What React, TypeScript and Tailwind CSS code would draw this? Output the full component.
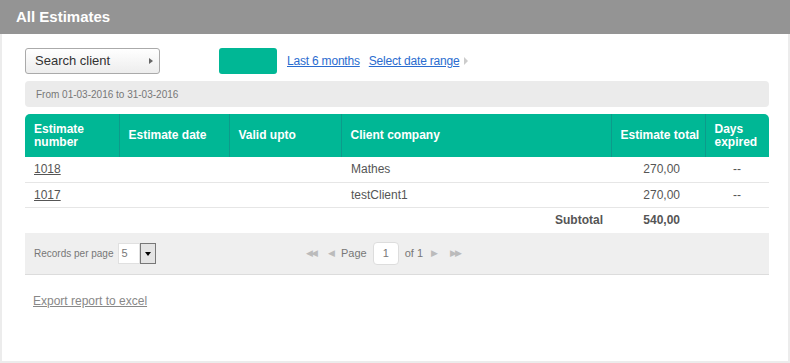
const rows = [
  { number: "1018", client: "Mathes", total: "270,00", expired: "--" },
  { number: "1017", client: "testClient1", total: "270,00", expired: "--" },
];

const headers = [
  { label: "Estimate number", className: "w-[94px]" },
  { label: "Estimate date", className: "w-[110px]" },
  { label: "Valid upto", className: "w-[112px]" },
  { label: "Client company", className: "w-[270px]" },
  { label: "Estimate total", className: "w-[94px] whitespace-nowrap" },
  { label: "Days expired", className: "w-[64px]" },
];

export default function App() {
  return (
    <div className="w-[790px] h-[363px] bg-white font-['Liberation_Sans',Arial,sans-serif] text-[#333]">
      <div className="h-[34px] bg-[#949494] flex items-center px-4">
        <h1 className="text-white font-bold text-[15px]">All Estimates</h1>
      </div>
      <div className="h-[329px] border-x-2 border-b-2 border-[#ececec] pl-[23px] pr-[19px] pt-[14px]">
        <Filters />
        <div className="mt-[7px] h-[26px] rounded bg-[#ebebeb] flex items-center px-[11px] text-[10px] text-[#777]">
          From 01-03-2016 to 31-03-2016
        </div>
        <EstimatesTable />
        <a href="#" className="inline-block mt-[17px] ml-[8px] text-[12px] text-[#888] underline">
          Export report to excel
        </a>
      </div>
    </div>
  );
}

const Filters = () => {
  return (
    <div className="flex items-center h-[26px]">
      <button className="w-[135px] h-[26px] rounded-[3px] border border-[#aaa] bg-gradient-to-b from-white to-[#ededed] flex items-center justify-between pl-[9px] pr-[6px] text-[13px] text-[#333]">
        Search client
        <span className="w-0 h-0 border-y-[3px] border-y-transparent border-l-[4px] border-l-[#666]" />
      </button>
      <button className="ml-[59px] w-[58px] h-[26px] rounded-[3px] bg-[#00b795]" />
      <a href="#" className="ml-[10px] text-[12px] tracking-[-0.2px] text-[#2a6ccf] underline">
        Last 6 months
      </a>
      <a href="#" className="ml-[9px] text-[12px] tracking-[-0.2px] text-[#2a6ccf] underline">
        Select date range
      </a>
      <span className="ml-[5px] w-0 h-0 border-y-[4px] border-y-transparent border-l-[4px] border-l-[#ccc]" />
    </div>
  );
};

const EstimatesTable = () => {
  return (
    <div className="mt-[7px] border-b border-[#dcdcdc]">
      <table className="w-full table-fixed border-collapse text-[12px]">
        <thead>
          <tr className="h-[43px] bg-[#00b795] text-white text-[12px] font-bold">
            {headers.map((h, idx) => (
              <th
                key={h.label}
                className={`${h.className} text-left align-middle px-[9px] leading-[13px] ${
                  idx < headers.length - 1 ? "border-r border-[#0c9b8b]" : ""
                } ${idx === 0 ? "rounded-tl-[5px]" : ""} ${
                  idx === headers.length - 1 ? "rounded-tr-[5px]" : ""
                }`}
              >
                {h.label}
              </th>
            ))}
          </tr>
        </thead>
        <tbody>
          {rows.map((row) => (
            <tr key={row.number} className="h-[25px] border-b border-[#e6e6e6]">
              <td className="px-[9px]">
                <a href="#" className="underline text-[#555]">
                  {row.number}
                </a>
              </td>
              <td />
              <td />
              <td className="px-[10px] text-[#555]">{row.client}</td>
              <td className="pr-[25px] text-right text-[#555]">{row.total}</td>
              <td className="text-center text-[#555]">{row.expired}</td>
            </tr>
          ))}
          <tr className="h-[26px] font-bold text-[#555]">
            <td />
            <td />
            <td />
            <td className="pr-[8px] text-right">Subtotal</td>
            <td className="pr-[25px] text-right">540,00</td>
            <td />
          </tr>
        </tbody>
      </table>
      <Pager />
    </div>
  );
};

const Pager = () => {
  return (
    <div className="h-[41px] bg-[#efefef] flex items-center px-[9px] text-[10px] text-[#777]">
      <div className="flex items-center w-[272px]">
        Records per page
        <div className="ml-[4px] flex h-[21px]">
          <div className="w-[22px] bg-white border border-[#e0e0e0] flex items-center pl-[3px] text-[11px]">5</div>
          <div className="w-[16px] bg-[#e4e4e4] border border-[#777] flex items-center justify-center">
            <span className="w-0 h-0 border-x-[3px] border-x-transparent border-t-[4px] border-t-black" />
          </div>
        </div>
      </div>
      <div className="flex items-center gap-[6px] text-[#bbb]">
        <span className="text-[9px] tracking-[-2px]">◀◀</span>
        <span className="ml-[6px] text-[9px]">◀</span>
        <span className="text-[#777] text-[11px]">Page</span>
        <div className="w-[26px] h-[23px] rounded-[4px] bg-white border border-[#ddd] flex items-center justify-center text-[#777] text-[11px]">
          1
        </div>
        <span className="text-[#777] text-[11px]">of 1</span>
        <span className="ml-[2px] text-[9px]">▶</span>
        <span className="ml-[6px] text-[9px] tracking-[-2px]">▶▶</span>
      </div>
    </div>
  );
};
